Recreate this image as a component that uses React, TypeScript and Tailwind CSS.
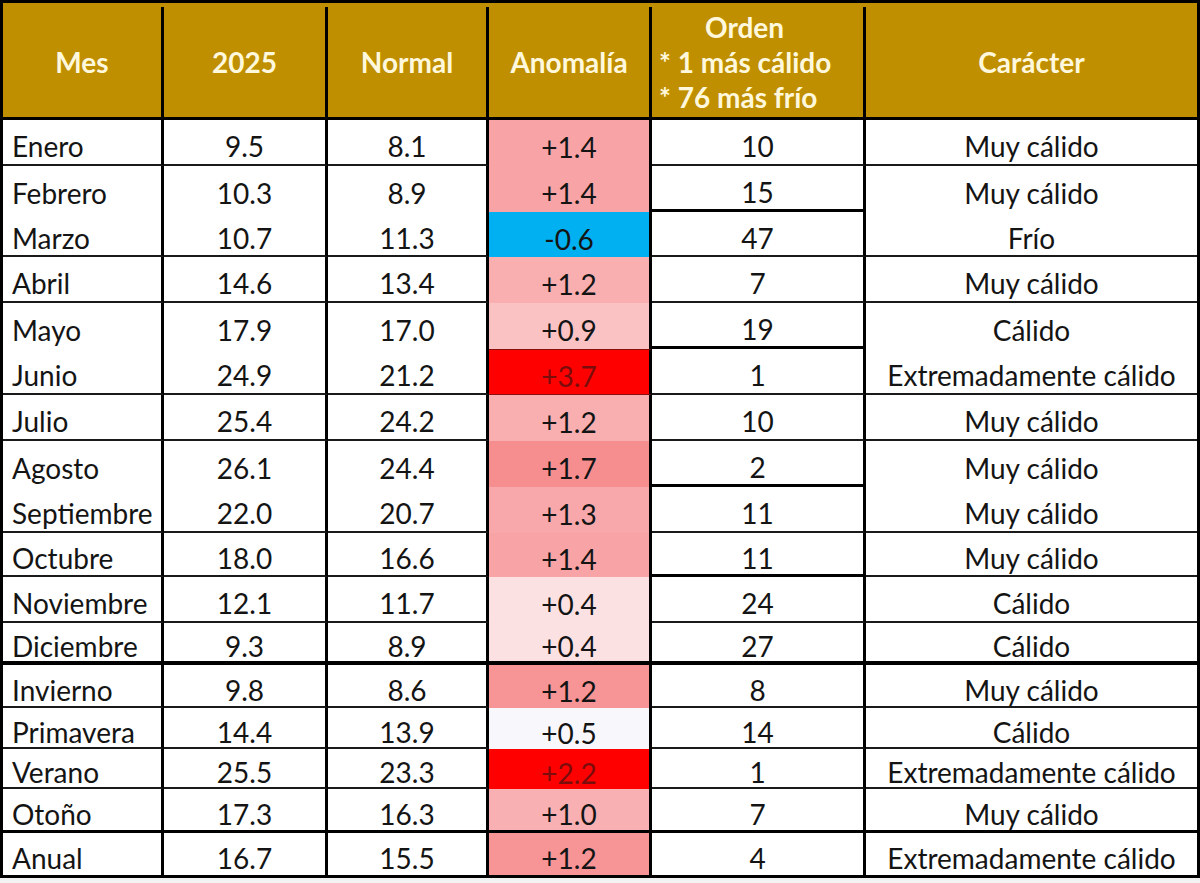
import React from 'react';

interface Row {
  mes: string;
  actual: string;
  normal: string;
  anomalia: string;
  orden: string;
  caracter: string;
  h: string;
  line: string;
  ordenLine: string;
  anomLine: string;
  anomBg: string;
  anomText?: string;
}

const THIN = 'border-b-2 border-b-[#1a1a1a]';
const THICK = 'border-b-[3px] border-b-black';
const HEAVY = 'border-b-4 border-b-black';

const rows: Row[] = [
  { mes: 'Enero', actual: '9.5', normal: '8.1', anomalia: '+1.4', orden: '10', caracter: 'Muy cálido', h: 'h-[46px]', line: THIN, ordenLine: THIN, anomLine: '', anomBg: 'bg-[#f8a3a5]' },
  { mes: 'Febrero', actual: '10.3', normal: '8.9', anomalia: '+1.4', orden: '15', caracter: 'Muy cálido', h: 'h-[46px]', line: '', ordenLine: THICK, anomLine: '', anomBg: 'bg-[#f8a3a5]' },
  { mes: 'Marzo', actual: '10.7', normal: '11.3', anomalia: '-0.6', orden: '47', caracter: 'Frío', h: 'h-[45px]', line: THIN, ordenLine: THIN, anomLine: '', anomBg: 'bg-[#00b0f0]' },
  { mes: 'Abril', actual: '14.6', normal: '13.4', anomalia: '+1.2', orden: '7', caracter: 'Muy cálido', h: 'h-[46px]', line: THIN, ordenLine: THIN, anomLine: '', anomBg: 'bg-[#f9aeb0]' },
  { mes: 'Mayo', actual: '17.9', normal: '17.0', anomalia: '+0.9', orden: '19', caracter: 'Cálido', h: 'h-[46px]', line: '', ordenLine: THICK, anomLine: '', anomBg: 'bg-[#fbc2c4]' },
  { mes: 'Junio', actual: '24.9', normal: '21.2', anomalia: '+3.7', orden: '1', caracter: 'Extremadamente cálido', h: 'h-[46px]', line: THIN, ordenLine: THIN, anomLine: 'border-y border-y-[#8a1010]', anomBg: 'bg-[#ff0000]', anomText: 'text-[#7a0c0c]' },
  { mes: 'Julio', actual: '25.4', normal: '24.2', anomalia: '+1.2', orden: '10', caracter: 'Muy cálido', h: 'h-[46px]', line: THIN, ordenLine: THIN, anomLine: '', anomBg: 'bg-[#f9aeb0]' },
  { mes: 'Agosto', actual: '26.1', normal: '24.4', anomalia: '+1.7', orden: '2', caracter: 'Muy cálido', h: 'h-[46px]', line: '', ordenLine: THICK, anomLine: '', anomBg: 'bg-[#f68e90]' },
  { mes: 'Septiembre', actual: '22.0', normal: '20.7', anomalia: '+1.3', orden: '11', caracter: 'Muy cálido', h: 'h-[46px]', line: THIN, ordenLine: THIN, anomLine: '', anomBg: 'bg-[#f8a8aa]' },
  { mes: 'Octubre', actual: '18.0', normal: '16.6', anomalia: '+1.4', orden: '11', caracter: 'Muy cálido', h: 'h-[44px]', line: THIN, ordenLine: THICK, anomLine: '', anomBg: 'bg-[#f8a3a5]' },
  { mes: 'Noviembre', actual: '12.1', normal: '11.7', anomalia: '+0.4', orden: '24', caracter: 'Cálido', h: 'h-[46px]', line: THIN, ordenLine: THIN, anomLine: '', anomBg: 'bg-[#fce1e3]' },
  { mes: 'Diciembre', actual: '9.3', normal: '8.9', anomalia: '+0.4', orden: '27', caracter: 'Cálido', h: 'h-[42px]', line: HEAVY, ordenLine: HEAVY, anomLine: HEAVY, anomBg: 'bg-[#fce1e3]' },
  { mes: 'Invierno', actual: '9.8', normal: '8.6', anomalia: '+1.2', orden: '8', caracter: 'Muy cálido', h: 'h-[43px]', line: THIN, ordenLine: THIN, anomLine: '', anomBg: 'bg-[#f69496]' },
  { mes: 'Primavera', actual: '14.4', normal: '13.9', anomalia: '+0.5', orden: '14', caracter: 'Cálido', h: 'h-[41px]', line: THIN, ordenLine: THIN, anomLine: '', anomBg: 'bg-[#f8f8fc]' },
  { mes: 'Verano', actual: '25.5', normal: '23.3', anomalia: '+2.2', orden: '1', caracter: 'Extremadamente cálido', h: 'h-[40px]', line: THIN, ordenLine: THIN, anomLine: '', anomBg: 'bg-[#ff0000]', anomText: 'text-[#7a0c0c]' },
  { mes: 'Otoño', actual: '17.3', normal: '16.3', anomalia: '+1.0', orden: '7', caracter: 'Muy cálido', h: 'h-[44px]', line: THICK, ordenLine: THICK, anomLine: THICK, anomBg: 'bg-[#f9b0b2]' },
  { mes: 'Anual', actual: '16.7', normal: '15.5', anomalia: '+1.2', orden: '4', caracter: 'Extremadamente cálido', h: 'h-[42px]', line: '', ordenLine: '', anomLine: '', anomBg: 'bg-[#f69496]' },
];

const cell = 'flex items-center border-r-[3px] border-r-black';
const body = 'pt-[8px] overflow-hidden';

const App: React.FC = () => {
  return (
    <div className="min-h-[883px] w-[1200px] bg-[#f2f2f2] font-['Lato','Liberation_Sans',sans-serif]">
      <div className="w-[1200px] border-[3px] border-black bg-white">
        {/* cabecera */}
        <div className="grid h-[117px] grid-cols-[161px_164px_161px_163px_214px_1fr] border-b-[3px] border-b-black bg-[#bf8f00] pt-[4px] text-[28px] font-bold leading-[35px] text-[#fff8dc]">
          <div className={`${cell} justify-center`}>Mes</div>
          <div className={`${cell} justify-center`}>2025</div>
          <div className={`${cell} justify-center`}>Normal</div>
          <div className={`${cell} justify-center`}>Anomalía</div>
          <div className={`${cell} flex-col items-start justify-center pl-[7px]`}>
            <span className="pl-[46px]">Orden</span>
            <span>* 1 más cálido</span>
            <span>* 76 más frío</span>
          </div>
          <div className="flex items-center justify-center">Carácter</div>
        </div>

        {rows.map((r) => (
          <div
            key={r.mes}
            className={`grid grid-cols-[161px_164px_161px_163px_214px_1fr] grid-rows-[100%] overflow-hidden text-[28px] leading-[28px] text-[#141414] ${r.h}`}
          >
            <div className={`${cell} ${body} pl-[9px] ${r.line}`}>{r.mes}</div>
            <div className={`${cell} ${body} justify-center ${r.line}`}>{r.actual}</div>
            <div className={`${cell} ${body} justify-center ${r.line}`}>{r.normal}</div>
            <div className={`${cell} ${body} justify-center ${r.anomBg} ${r.anomText ?? ''} ${r.anomLine}`}>{r.anomalia}</div>
            <div className={`${cell} ${body} justify-center ${r.ordenLine}`}>{r.orden}</div>
            <div className={`flex items-center justify-center ${body} ${r.line}`}>{r.caracter}</div>
          </div>
        ))}
      </div>
    </div>
  );
};

export default App;
